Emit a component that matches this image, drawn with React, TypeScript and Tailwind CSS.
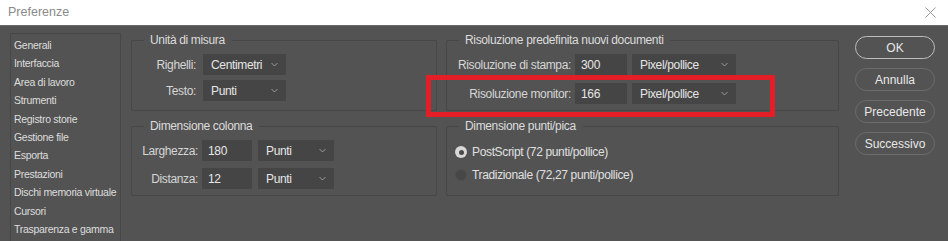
import React from "react";

const categories = [
  "Generali",
  "Interfaccia",
  "Area di lavoro",
  "Strumenti",
  "Registro storie",
  "Gestione file",
  "Esporta",
  "Prestazioni",
  "Dischi memoria virtuale",
  "Cursori",
  "Trasparenza e gamma",
];

const buttons = [
  { label: "OK", primary: true },
  { label: "Annulla" },
  { label: "Precedente" },
  { label: "Successivo" },
];

const Chevron = () => (
  <svg width="7" height="5" viewBox="0 0 7 5" className="shrink-0">
    <polyline points="0.5,1 3.5,4 6.5,1" fill="none" stroke="#9a9a9a" strokeWidth="1" />
  </svg>
);

const Select = ({ value, width }: { value: string; width: string }) => (
  <div className={`${width} h-[21px] bg-[#454545] flex items-center justify-between pl-2 pr-2 text-[#e6e6e6] whitespace-nowrap`}>
    <span>{value}</span>
    <Chevron />
  </div>
);

const Field = ({ value, width }: { value: string; width: string }) => (
  <div className={`${width} h-[21px] bg-[#454545] flex items-center pl-[6px] text-[#e6e6e6]`}>
    {value}
  </div>
);

const Label = ({ text, width }: { text: string; width: string }) => (
  <div className={`${width} flex justify-end whitespace-nowrap text-[#d6d6d6] shrink-0`}>{text}</div>
);

const Group = ({ title, children }: { title: string; children: React.ReactNode }) => (
  <fieldset className="border border-[#474747] rounded-[2px] pl-3 pr-3 pt-[7px] pb-[6px] min-w-0">
    <legend className="pl-[6px] pr-[7px] leading-[14px] text-[#dcdcdc] whitespace-nowrap">{title}</legend>
    {children}
  </fieldset>
);

const Radio = ({ checked, label }: { checked?: boolean; label: string }) => (
  <div className="flex items-center gap-[5px] h-[20px]">
    {checked ? (
      <span className="w-[12px] h-[12px] rounded-full bg-[#d8d8d8] flex items-center justify-center">
        <span className="w-[5px] h-[5px] rounded-full bg-[#4a4a4a]" />
      </span>
    ) : (
      <span className="w-[12px] h-[12px] rounded-full bg-[#474747] border border-[#4f4f4f]" />
    )}
    <span className="text-[#e0e0e0] whitespace-nowrap">{label}</span>
  </div>
);

export default function App() {
  return (
    <div
      className="w-[948px] h-[241px] overflow-hidden bg-[#535353] text-[12px] tracking-[-0.35px] relative"
      style={{ fontFamily: '"Liberation Sans", Arial, sans-serif' }}
    >
      {/* Title bar */}
      <div className="h-[26px] bg-white border-b border-[#6a6a6a] flex items-center justify-between pl-2 pr-[12px]">
        <span className="text-[#8a8a8a] text-[12.5px] tracking-normal">Preferenze</span>
        <svg width="11" height="11" viewBox="0 0 11 11">
          <path d="M0.5 0.5 L10.5 10.5 M10.5 0.5 L0.5 10.5" stroke="#9a9a9a" strokeWidth="1" />
        </svg>
      </div>

      <div className="flex items-start pl-[10px] pt-[7px]">
        {/* Category list */}
        <div className="w-[111px] h-[220px] border border-[#474747] pt-[2px] shrink-0 text-[10.5px] tracking-[-0.3px] text-[#dedede]">
          {categories.map((c) => (
            <div key={c} className="h-[18.4px] leading-[18.4px] pl-[3px] whitespace-nowrap">
              {c}
            </div>
          ))}
          <div className="h-[10px] mt-[3px] bg-[#666666]" />
        </div>

        {/* Settings groups */}
        <div className="ml-[10px] grid grid-cols-[306px_393px] content-start gap-x-[9px] gap-y-[8px] shrink-0">
          <Group title="Unità di misura">
            <div className="flex flex-col gap-[5px]">
              <div className="flex items-center">
                <Label text="Righelli:" width="w-[52px]" />
                <div className="ml-[7px]">
                  <Select value="Centimetri" width="w-[83px]" />
                </div>
              </div>
              <div className="flex items-center">
                <Label text="Testo:" width="w-[52px]" />
                <div className="ml-[7px]">
                  <Select value="Punti" width="w-[83px]" />
                </div>
              </div>
            </div>
          </Group>

          <Group title="Risoluzione predefinita nuovi documenti">
            <div className="flex flex-col gap-[8px]">
              <div className="flex items-center">
                <Label text="Risoluzione di stampa:" width="w-[112px]" />
                <div className="ml-[4px] flex gap-[5px]">
                  <Field value="300" width="w-[52px]" />
                  <Select value="Pixel/pollice" width="w-[104px]" />
                </div>
              </div>
              <div className="flex items-center">
                <Label text="Risoluzione monitor:" width="w-[112px]" />
                <div className="ml-[4px] flex gap-[5px]">
                  <Field value="166" width="w-[52px]" />
                  <Select value="Pixel/pollice" width="w-[104px]" />
                </div>
              </div>
            </div>
          </Group>

          <Group title="Dimensione colonna">
            <div className="flex flex-col gap-[7px]">
              <div className="flex items-center">
                <Label text="Larghezza:" width="w-[54px]" />
                <div className="ml-[4px] flex gap-[6px]">
                  <Field value="180" width="w-[50px]" />
                  <Select value="Punti" width="w-[76px]" />
                </div>
              </div>
              <div className="flex items-center">
                <Label text="Distanza:" width="w-[54px]" />
                <div className="ml-[4px] flex gap-[6px]">
                  <Field value="12" width="w-[50px]" />
                  <Select value="Punti" width="w-[76px]" />
                </div>
              </div>
            </div>
          </Group>

          <Group title="Dimensione punti/pica">
            <div className="flex flex-col gap-[3px] pt-[2px] -ml-[4px]">
              <Radio checked label="PostScript (72 punti/pollice)" />
              <Radio label="Tradizionale (72,27 punti/pollice)" />
            </div>
          </Group>
        </div>

        {/* Buttons */}
        <div className="ml-[16px] pt-[3px] flex flex-col gap-[9px] shrink-0">
          {buttons.map((b) => (
            <button
              key={b.label}
              className={`w-[80px] h-[23px] rounded-full border text-[12px] tracking-normal text-[#e8e8e8] ${
                b.primary ? "border-[#bdbdbd]" : "border-[#6c6c6c]"
              }`}
            >
              {b.label}
            </button>
          ))}
        </div>
      </div>

      {/* Highlight */}
      <div className="absolute left-[426px] top-[75px] w-[349px] h-[42px] border-[5px] border-[#e31e26] pointer-events-none" />
    </div>
  );
}
